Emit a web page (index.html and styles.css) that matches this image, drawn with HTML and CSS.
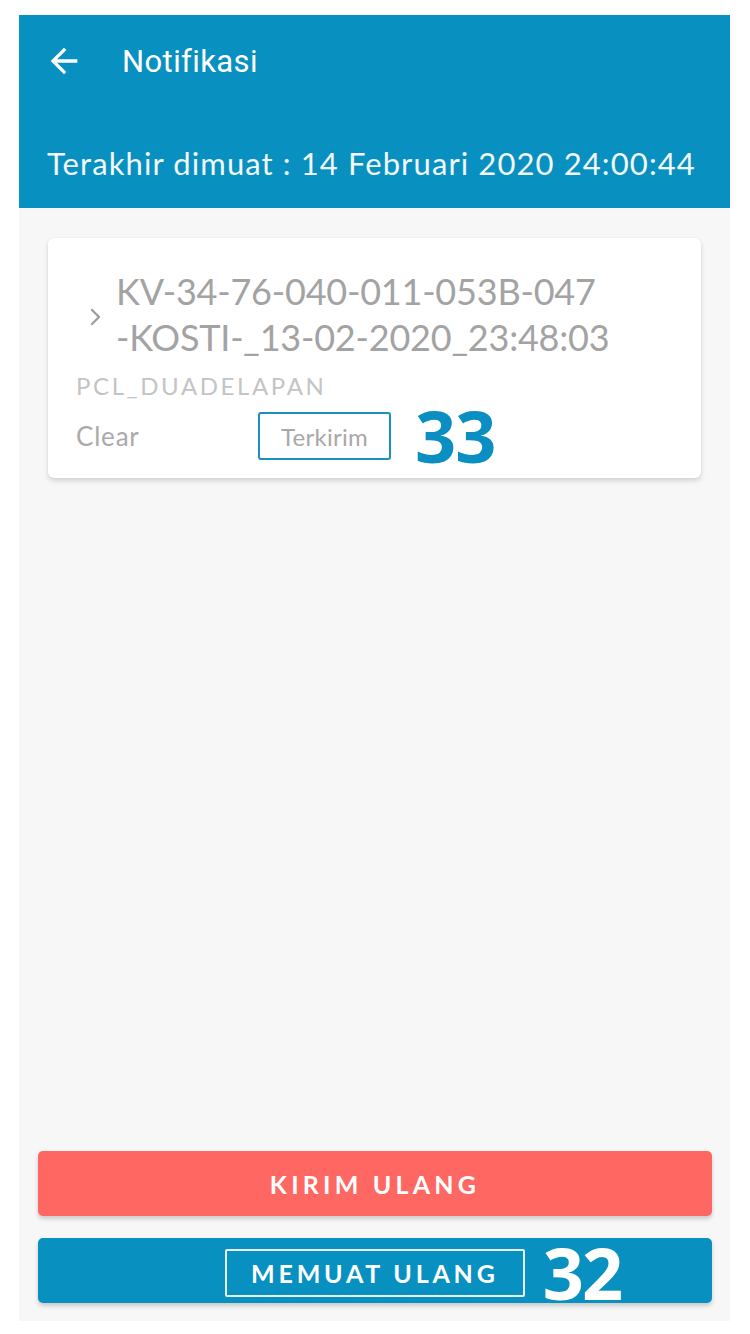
FILE: index.html
```html
<!DOCTYPE html>
<html>
<head>
<meta charset="utf-8">
<link rel="stylesheet" href="styles.css">
</head>
<body>
<div class="app">
  <header class="header">
    <div class="toolbar">
      <svg class="back" width="40" height="40" viewBox="0 0 24 24"><path d="M20 11H7.83l5.59-5.59L12 4l-8 8 8 8 1.41-1.41L7.83 13H20v-2z" fill="#fff"/></svg>
      <span class="title">Notifikasi</span>
    </div>
    <div class="subtitle">Terakhir dimuat : 14 Februari 2020 24:00:44</div>
  </header>
  <main class="content">
    <div class="card">
      <div class="card-head">
        <svg class="chev" width="14" height="20" viewBox="0 0 14 20"><path d="M3 3l7 7-7 7" fill="none" stroke="#9e9e9e" stroke-width="2.4" stroke-linecap="round" stroke-linejoin="round"/></svg>
        <div class="card-title">KV-34-76-040-011-053B-047<br>-KOSTI-_13-02-2020_23:48:03</div>
      </div>
      <div class="user">PCL_DUADELAPAN</div>
      <div class="status-row">
        <span class="clear">Clear</span>
        <span class="badge">Terkirim</span>
        <span class="count count-blue">33</span>
      </div>
    </div>
    <div class="spacer"></div>
    <div class="actions">
      <button class="btn btn-red">KIRIM ULANG</button>
      <button class="btn btn-blue"><span class="btn-box">MEMUAT ULANG</span><span class="count count-white">32</span></button>
    </div>
  </main>
</div>
</body>
</html>
```

FILE: styles.css
```css
* { box-sizing: border-box; }
html, body { margin: 0; padding: 0; background: #ffffff; }
body { font-family: "Lato", "Open Sans", sans-serif; }
.app {
  width: 711px;
  height: 1306px;
  margin: 15px 0 0 19px;
  background: #f7f7f7;
  display: flex;
  flex-direction: column;
}
.header {
  background: #0890c1;
  height: 193px;
  color: #fff;
  display: flex;
  flex-direction: column;
}
.toolbar {
  height: 92px;
  display: flex;
  align-items: center;
  padding-left: 25px;
}
.back { display: block; }
.title {
  font-family: "Roboto", sans-serif;
  font-size: 31px;
  margin-left: 38px;
  letter-spacing: 0.4px;
}
.subtitle {
  padding-left: 28px;
  margin-top: 37px;
  font-size: 31px;
  letter-spacing: 1.1px;
  color: #f2f8fb;
}
.content {
  flex: 1;
  display: flex;
  flex-direction: column;
}
.card {
  margin: 30px 29px 0 29px;
  height: 240px;
  background: #fff;
  border-radius: 6px;
  box-shadow: 0 3px 5px rgba(0,0,0,0.14), 0 0 2px rgba(0,0,0,0.06);
  padding: 30px 28px 0 28px;
}
.card-head {
  display: flex;
  align-items: center;
}
.chev { margin-left: 13px; margin-right: 13px; margin-top: 6px; }
.card-title {
  font-family: "Lato", sans-serif;
  font-size: 36px;
  line-height: 46px;
  color: #a3a3a3;
  letter-spacing: -0.2px;
}
.user {
  margin-top: 11px;
  font-size: 24px;
  color: #c4c4c4;
  letter-spacing: 2.6px;
}
.status-row {
  display: flex;
  align-items: center;
  margin-top: 1px;
}
.clear {
  font-size: 26px;
  color: #aaaaaa;
  width: 182px;
  letter-spacing: 0.8px;
}
.badge {
  border: 2px solid #1a8fc0;
  border-radius: 3px;
  height: 48px;
  width: 133px;
  display: flex;
  align-items: center;
  justify-content: center;
  font-size: 24px;
  color: #a8a8a8;
  letter-spacing: 0.3px;
}
.count {
  font-family: "Open Sans", sans-serif;
  font-weight: 700;
  font-size: 72px;
  line-height: 1;
}
.count-blue {
  color: #0b8fc2;
  margin-left: 24px;
  margin-top: -2px;
  letter-spacing: -1px;
}
.spacer { flex: 1; }
.actions {
  padding: 0 18px 18px 19px;
  display: flex;
  flex-direction: column;
  gap: 22px;
}
.btn {
  width: 100%;
  height: 65px;
  border: none;
  border-radius: 5px;
  color: #fff;
  font-family: "Lato", sans-serif;
  font-weight: 700;
  font-size: 25px;
  letter-spacing: 4.2px;
  box-shadow: 0 3px 4px rgba(0,0,0,0.18);
  display: flex;
  align-items: center;
  justify-content: center;
  padding: 0;
}
.btn-red { background: #ff6762; }
.btn-blue { background: #0890c1; }
.btn-box {
  border: 2px solid #e8f3f8;
  border-radius: 2px;
  width: 300px;
  height: 48px;
  margin-top: 5px;
  display: flex;
  align-items: center;
  justify-content: center;
  margin-left: 164px;
  letter-spacing: 3.8px;
}
.count-white {
  color: #fff;
  margin-left: 18px;
  letter-spacing: -2px;
  margin-right: 68px;
  margin-top: 2px;
}
```
